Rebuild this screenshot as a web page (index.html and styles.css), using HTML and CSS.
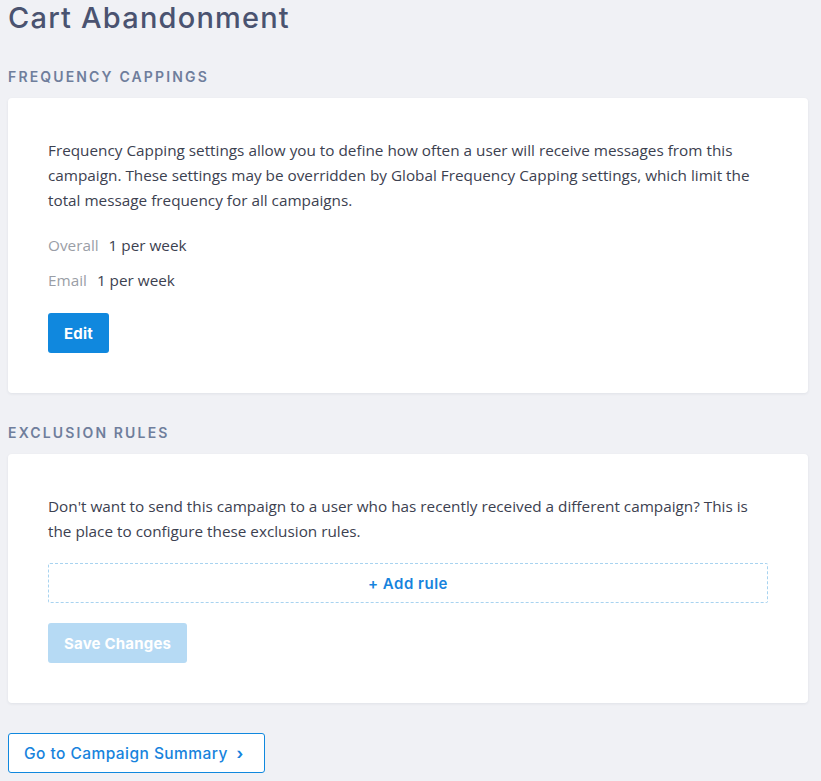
FILE: index.html
```html
<!DOCTYPE html>
<html lang="en">
<head>
<meta charset="utf-8">
<title>Cart Abandonment</title>
<link rel="stylesheet" href="styles.css">
</head>
<body>
<main class="page">
  <h1 class="page-title">Cart Abandonment</h1>

  <section class="section">
    <h2 class="section-title">Frequency Cappings</h2>
    <div class="card">
      <p class="card-text">Frequency Capping settings allow you to define how often a user will receive messages from this campaign. These settings may be overridden by Global Frequency Capping settings, which limit the total message frequency for all campaigns.</p>
      <div class="cap-row"><span class="cap-label">Overall</span><span class="cap-value">1 per week</span></div>
      <div class="cap-row"><span class="cap-label">Email</span><span class="cap-value">1 per week</span></div>
      <button class="btn btn-primary" type="button">Edit</button>
    </div>
  </section>

  <section class="section">
    <h2 class="section-title">Exclusion Rules</h2>
    <div class="card">
      <p class="card-text">Don't want to send this campaign to a user who has recently received a different campaign? This is the place to configure these exclusion rules.</p>
      <button class="add-rule" type="button">+ Add rule</button>
      <button class="btn btn-primary btn-disabled" type="button" disabled>Save Changes</button>
    </div>
  </section>

  <button class="btn btn-outline" type="button">Go to Campaign Summary <span class="chev">&#8250;</span></button>
</main>
</body>
</html>
```

FILE: styles.css
```css
html, body {
  margin: 0;
  padding: 0;
  background: #f0f1f5;
}

.page {
  padding: 0 13px 8px 8px;
  font-family: "Open Sans", "Noto Sans", sans-serif;
  color: #3c4150;
}

.page-title {
  margin: 0 0 2px;
  font-family: Inter, "DejaVu Sans", sans-serif;
  font-weight: 500;
  font-size: 29px;
  line-height: 35px;
  letter-spacing: 1.2px;
  color: #4a5370;
}

.section-title {
  margin: 0;
  padding: 30px 0 11px;
  font-family: Inter, "DejaVu Sans", sans-serif;
  font-weight: 600;
  font-size: 14px;
  line-height: 20px;
  letter-spacing: 2.15px;
  text-transform: uppercase;
  color: #6f7e9c;
}

.card {
  background: #ffffff;
  border-radius: 4px;
  box-shadow: 0 1px 3px rgba(40, 50, 80, 0.08);
  padding: 40px;
  display: flex;
  flex-direction: column;
  align-items: flex-start;
}

.card-text {
  margin: 0 0 20px;
  font-size: 15.3px;
  line-height: 25px;
  color: #3c4150;
}

.cap-row {
  display: flex;
  gap: 10px;
  font-size: 15.3px;
  line-height: 25px;
  margin-bottom: 10px;
}

.cap-label {
  color: #9a9ea6;
}

.cap-value {
  color: #3c4150;
}

.btn {
  height: 40px;
  border-radius: 3px;
  font-family: Inter, "DejaVu Sans", sans-serif;
  font-weight: 700;
  font-size: 15px;
  letter-spacing: 0.2px;
  padding: 0 16px;
  cursor: pointer;
}

.btn-primary {
  margin-top: 10px;
  background: #1088de;
  border: none;
  color: #ffffff;
}

.btn-disabled {
  margin-top: 20px;
  background: #b6daf4;
  cursor: default;
}

.add-rule {
  margin-top: -1px;
  align-self: stretch;
  height: 40px;
  background: #ffffff;
  border: 1px dashed #a8d3f0;
  border-radius: 2px;
  font-family: Inter, "DejaVu Sans", sans-serif;
  font-weight: 600;
  font-size: 15px;
  letter-spacing: 0.5px;
  color: #1783dd;
  cursor: pointer;
}

.btn-outline {
  margin-top: 30px;
  background: #ffffff;
  border: 1px solid #1088de;
  color: #1783dd;
  font-weight: 500;
  font-size: 15.5px;
  letter-spacing: 0.45px;
  padding: 0 15px;
  width: 257px;
  text-align: left;
}

.chev {
  margin-left: 4px;
  font-weight: 700;
}
```
